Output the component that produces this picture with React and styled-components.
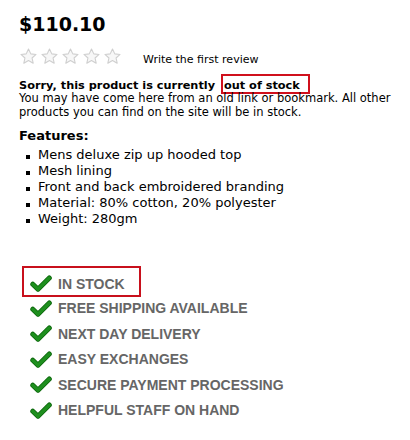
import React from 'react';
import styled, { createGlobalStyle } from 'styled-components';

const GlobalStyle = createGlobalStyle`
  body {
    margin: 0;
    background: #fff;
    font-family: "DejaVu Sans", Verdana, sans-serif;
    color: #000;
  }
`;

const Page = styled.div`
  padding: 10px 12px 0 19px;
  width: 410px;
  box-sizing: border-box;
`;

const Price = styled.h1`
  margin: 0;
  font-size: 19px;
  line-height: 28px;
  font-weight: bold;
`;

const RatingRow = styled.div`
  display: flex;
  align-items: flex-end;
  gap: 21px;
  margin-top: 9px;
`;

const Stars = styled.div`
  display: flex;
  gap: 2px;
`;

const ReviewLink = styled.span`
  font-size: 11px;
  line-height: 13px;
`;

const Notice = styled.div`
  margin-top: 13px;
  font-size: 11.5px;
  line-height: 13.4px;
`;

const NoticeTitle = styled.div`
  font-size: 11.3px;
  font-weight: bold;
`;

const Boxed = styled.span`
  border: 2px solid #d0101c;
  padding: 3px 8px 0 1px;
  margin-left: 2px;
`;

const FeaturesTitle = styled.h2`
  margin: 9px 0 0;
  font-size: 13px;
  line-height: 16px;
  font-weight: bold;
`;

const FeatureList = styled.ul`
  margin: 3px 0 0;
  padding: 0;
  list-style: none;
`;

const FeatureItem = styled.li`
  position: relative;
  padding-left: 19px;
  font-size: 13px;
  line-height: 16px;
  &::before {
    content: '';
    position: absolute;
    left: 7px;
    top: 8px;
    width: 4px;
    height: 4px;
    background: #000;
  }
`;

const StockList = styled.ul`
  margin: 39px 0 0;
  padding: 0;
  list-style: none;
`;

const StockItem = styled.li`
  display: flex;
  align-items: center;
  gap: 6px;
  height: 25.6px;
  width: max-content;
  padding: 0 14px 0 6px;
  margin-left: 3px;
  box-sizing: border-box;
  font-family: "Liberation Sans", Arial, sans-serif;
  font-size: 14px;
  font-weight: bold;
  color: #666;
  border: 2px solid ${(p) => (p.$highlight ? '#c8101c' : 'transparent')};
  ${(p) => p.$highlight && 'height: 31px; padding-top: 4px; margin-bottom: -2px;'}
`;

const Star = () => (
  <svg width="19" height="19" viewBox="0 0 24 24">
    <path
      d="M12 2.5l2.9 6.2 6.6.7-5 4.5 1.4 6.6L12 17.1l-5.9 3.4 1.4-6.6-5-4.5 6.6-.7z"
      fill="#f7f7f7"
      stroke="#cfcfcf"
      strokeWidth="1.4"
      strokeLinejoin="round"
    />
  </svg>
);

const Check = () => (
  <svg width="22" height="17" viewBox="0 0 22 17">
    <path
      d="M2.8 9.2l5.2 5L19.3 3"
      fill="none"
      stroke="#0b650b"
      strokeWidth="5"
      strokeLinecap="round"
      strokeLinejoin="round"
    />
    <path
      d="M2.8 9.2l5.2 5L19.3 3"
      fill="none"
      stroke="#1e8f1e"
      strokeWidth="3.4"
      strokeLinecap="round"
      strokeLinejoin="round"
    />
  </svg>
);

const perks = [
  'IN STOCK',
  'FREE SHIPPING AVAILABLE',
  'NEXT DAY DELIVERY',
  'EASY EXCHANGES',
  'SECURE PAYMENT PROCESSING',
  'HELPFUL STAFF ON HAND',
];

const features = [
  'Mens deluxe zip up hooded top',
  'Mesh lining',
  'Front and back embroidered branding',
  'Material: 80% cotton, 20% polyester',
  'Weight: 280gm',
];

export default function App() {
  return (
    <>
      <GlobalStyle />
      <Page>
        <Price>$110.10</Price>
        <RatingRow>
          <Stars>
            {[0, 1, 2, 3, 4].map((i) => (
              <Star key={i} />
            ))}
          </Stars>
          <ReviewLink>Write the first review</ReviewLink>
        </RatingRow>
        <Notice>
          <NoticeTitle>
            Sorry, this product is currently <Boxed>out of stock</Boxed>
          </NoticeTitle>
          You may have come here from an old link or bookmark. All other
          products you can find on the site will be in stock.
        </Notice>
        <FeaturesTitle>Features:</FeaturesTitle>
        <FeatureList>
          {features.map((f) => (
            <FeatureItem key={f}>{f}</FeatureItem>
          ))}
        </FeatureList>
        <StockList>
          {perks.map((p, i) => (
            <StockItem key={p} $highlight={i === 0}>
              <Check />
              {p}
            </StockItem>
          ))}
        </StockList>
      </Page>
    </>
  );
}
